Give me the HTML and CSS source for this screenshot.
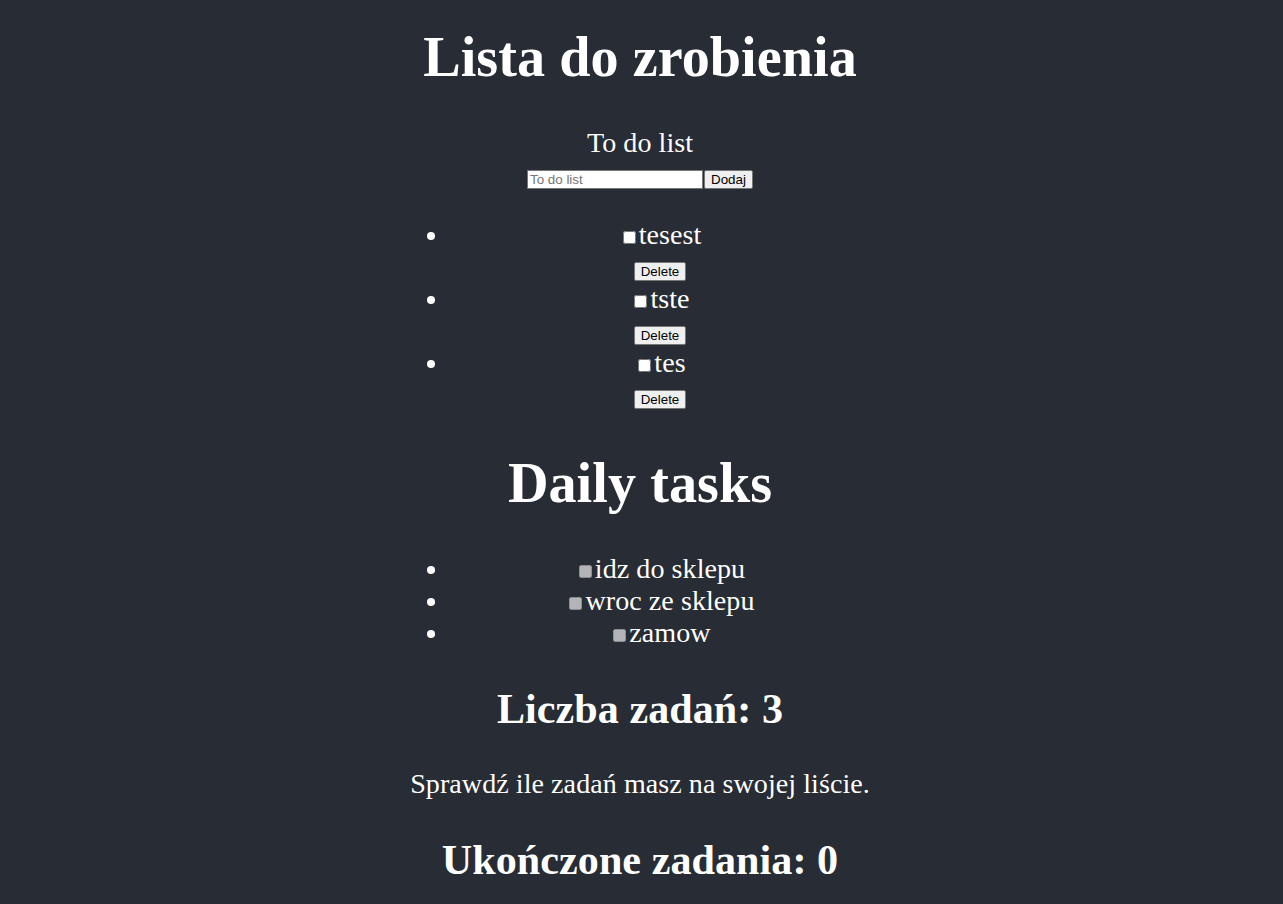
FILE: index.html
```html
<!DOCTYPE html>
<html lang="pl">
<head>
<meta charset="utf-8">
<title>Lista do zrobienia</title>
<link rel="stylesheet" href="styles.css">
</head>
<body>
<div class="app">
  <div class="content">
    <h1 class="title">Lista do zrobienia</h1>
    <div class="form">
      <div class="label">To do list</div>
      <div class="form-row"><input class="todo-input" type="text" placeholder="To do list"><button class="btn">Dodaj</button></div>
    </div>
    <ul class="list">
      <li><div class="item"><input type="checkbox" class="check"><span>tesest</span></div><button class="btn">Delete</button></li>
      <li><div class="item"><input type="checkbox" class="check"><span>tste</span></div><button class="btn">Delete</button></li>
      <li><div class="item"><input type="checkbox" class="check"><span>tes</span></div><button class="btn">Delete</button></li>
    </ul>
    <h1 class="daily-title">Daily tasks</h1>
    <ul class="list daily">
      <li><input type="checkbox" class="check" disabled><span>idz do sklepu</span></li>
      <li><input type="checkbox" class="check" disabled><span>wroc ze sklepu</span></li>
      <li><input type="checkbox" class="check" disabled><span>zamow</span></li>
    </ul>
    <h2 class="count">Liczba zadań: 3</h2>
    <p class="desc">Sprawdź ile zadań masz na swojej liście.</p>
    <h2 class="count">Ukończone zadania: 0</h2>
  </div>
</div>
</body>
</html>
```

FILE: styles.css
```css
html, body {
  margin: 0;
  padding: 0;
  background: #282c34;
}

.app {
  min-height: 100vh;
  background: #282c34;
  color: #ffffff;
  font-family: "Liberation Serif", "Times New Roman", serif;
  font-size: 28.08px;
  text-align: center;
  display: flex;
  flex-direction: column;
  align-items: center;
  padding-right: 3px;
}

.content {
  display: block;
  letter-spacing: 0.05px;
}

.title {
  font-size: 2em;
  margin: 25px 0 0.67em;
}

.daily-title {
  font-size: 2em;
  margin: 40.5px 0 0.67em;
}

.todo-input {
  font-family: "Liberation Sans", Arial, sans-serif;
  font-size: 13.33px;
  width: 170px;
  height: 15px;
  padding: 1px 2px;
  border: 1px solid #767676;
  border-radius: 0;
  margin: 0 1px 0 0;
  box-sizing: content-box;
  background: #fff;
  letter-spacing: normal;
}

.todo-input::placeholder {
  color: #757575;
}

.btn {
  font-family: "Liberation Sans", Arial, sans-serif;
  font-size: 13.33px;
  color: #000;
  background: #efefef;
  border: 1px solid #767676;
  border-radius: 2px;
  padding: 1px 6px;
  margin: 0;
  letter-spacing: normal;
}

.list {
  margin: 28px 0;
  padding-left: 40px;
}

.list li {
  list-style: disc;
}

.check {
  margin: 3px 3px 3px 4px;
}

.desc {
  margin: 1em 0;
}

.count {
  font-size: 1.5em;
  margin: 0.83em 0;
}
```
